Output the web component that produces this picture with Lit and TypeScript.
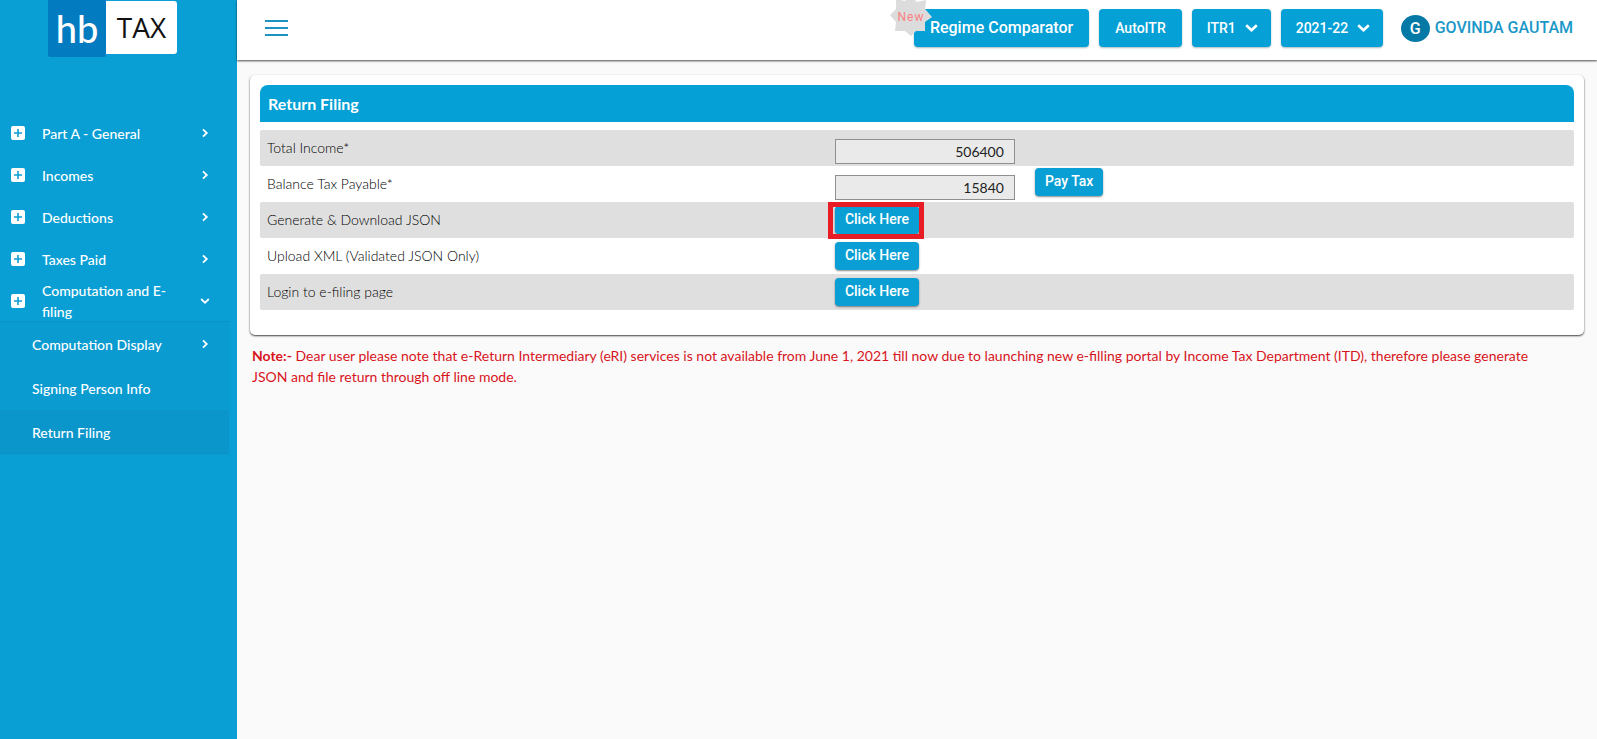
import { LitElement, html, css, svg, nothing } from "lit";
import { customElement } from "lit/decorators.js";
import { classMap } from "lit/directives/class-map.js";

interface NavItem {
  label: string;
  open?: boolean;
}

const NAV: NavItem[] = [
  { label: "Part A - General" },
  { label: "Incomes" },
  { label: "Deductions" },
  { label: "Taxes Paid" },
  { label: "Computation and E-filing", open: true },
];

const SUB_NAV = [
  { label: "Computation Display", more: true, active: false },
  { label: "Signing Person Info", more: false, active: false },
  { label: "Return Filing", more: false, active: true },
];

const chevronRight = html`<svg class="chevron" viewBox="0 0 10 10" aria-hidden="true">
  ${svg`<path d="M3 1.3 6.8 5 3 8.7" fill="none" stroke="currentColor" stroke-width="1.8" />`}
</svg>`;

const chevronDown = html`<svg class="chevron" viewBox="0 0 10 10" aria-hidden="true">
  ${svg`<path d="M1.2 3 5 6.8 8.8 3" fill="none" stroke="currentColor" stroke-width="1.8" />`}
</svg>`;

const plusBox = html`<svg class="plus" viewBox="0 0 14 14" aria-hidden="true">
  <rect width="14" height="14" rx="2" fill="#fff" />
  <path d="M7 3v8M3 7h8" stroke="#0b9fd4" stroke-width="1.6" />
</svg>`;

@customElement("side-nav")
export class SideNav extends LitElement {
  static styles = css`
    :host {
      display: block;
      background: #0a9fd4;
      color: #fff;
      font: 500 14px/21px Lato, sans-serif;
    }
    .logo {
      display: flex;
      align-items: flex-start;
      width: 129px;
      margin: 0 auto 55px 48px;
      text-decoration: none;
    }
    .hb {
      flex: 0 0 58px;
      height: 57px;
      background: #027bc1;
      color: #fff;
      font: 500 38px/57px Lato, sans-serif;
      text-align: center;
      border-radius: 0 0 2px 2px;
    }
    .tax {
      flex: 1;
      height: 53px;
      margin-top: 1px;
      background: #fff;
      color: #111;
      font: 400 28px/53px "Open Sans", sans-serif;
      text-align: center;
      border-radius: 0 3px 3px 0;
    }
    ul {
      list-style: none;
      margin: 0;
      padding: 0;
    }
    .item {
      display: flex;
      align-items: center;
      height: 42px;
      box-sizing: border-box;
      margin-right: 8px;
      padding: 0 19px 0 11px;
      color: inherit;
      text-decoration: none;
    }
    .open {
      box-shadow: inset 0 -1px #0b91c6;
    }
    .label {
      flex: 1;
      max-width: 130px;
    }
    .plus {
      width: 14px;
      height: 14px;
      margin-right: 17px;
    }
    .chevron {
      width: 10px;
      height: 10px;
      margin-left: auto;
    }
    .group {
      background: #0a9bd0;
    }
    .sub {
      height: 44px;
      padding-left: 32px;
    }
    .active {
      background: #0b96cb;
      box-shadow: inset 0 -1px #0b91c6;
    }
    .sub .label {
      max-width: none;
    }
  `;

  render() {
    return html`
      <a class="logo" href="#" aria-label="hb TAX"><span class="hb">hb</span><span class="tax">TAX</span></a>
      <nav>
        <ul>
          ${NAV.map(
            (item) => html`<li>
              <a class=${classMap({ item: true, open: !!item.open })} href="#">
                ${plusBox}<span class="label">${item.label}</span>${item.open ? chevronDown : chevronRight}
              </a>
              ${item.open
                ? html`<ul>
                    ${SUB_NAV.map(
                      (s) => html`<li>
                        <a class=${classMap({ item: true, group: !s.active, sub: true, active: s.active })} href="#">
                          <span class="label">${s.label}</span>${s.more ? chevronRight : nothing}
                        </a>
                      </li>`
                    )}
                  </ul>`
                : nothing}
            </li>`
          )}
        </ul>
      </nav>
    `;
  }
}

@customElement("top-bar")
export class TopBar extends LitElement {
  static styles = css`
    :host {
      display: flex;
      align-items: flex-start;
      gap: 10px;
      height: 60px;
      box-sizing: border-box;
      padding: 9px 24px 0 28px;
      background: #fff;
      box-shadow: 0 1px 2px rgba(0, 0, 0, 0.7);
      font: 500 14px/20px Roboto, sans-serif;
    }
    .menu {
      margin-right: auto;
      padding: 11px 0;
      border: 0;
      background: none;
    }
    .menu svg {
      display: block;
      width: 23px;
      height: 16px;
    }
    .btn {
      height: 38px;
      border: 0;
      border-radius: 4px;
      background: #04a0d6;
      color: #fff;
      font: inherit;
      box-shadow: 0 1px 2px rgba(0, 60, 90, 0.35);
    }
    .compare {
      position: relative;
      padding: 0 16px;
      font-size: 16px;
    }
    .new {
      position: absolute;
      left: -25px;
      top: -14px;
      width: 44px;
      height: 44px;
    }
    .new text {
      font: 400 12px Roboto, sans-serif;
      letter-spacing: 1px;
    }
    .auto {
      padding: 0 16px;
    }
    .pick {
      position: relative;
      display: flex;
    }
    .pick select {
      appearance: none;
      padding: 0 34px 0 15px;
    }
    .pick svg {
      position: absolute;
      right: 13px;
      top: 14px;
      width: 13px;
      height: 10px;
      pointer-events: none;
    }
    .user {
      display: flex;
      align-items: center;
      gap: 5px;
      height: 38px;
      margin-left: 8px;
      color: #1b98c9;
      font-size: 16px;
      text-decoration: none;
    }
    .avatar {
      width: 29px;
      height: 27px;
      border-radius: 50%;
      background: #0579a6;
      color: #fff;
      line-height: 27px;
      text-align: center;
    }
  `;

  private picker(label: string, value: string) {
    return html`<span class="pick">
      <select class="btn" aria-label=${label}><option>${value}</option></select>
      <svg viewBox="0 0 13 10" aria-hidden="true">
        <path d="M1.2 2.2 6.5 7.3 11.8 2.2" fill="none" stroke="#fff" stroke-width="2.6" />
      </svg>
    </span>`;
  }

  render() {
    return html`
      <button class="menu" aria-label="Menu">
        <svg viewBox="0 0 23 16"><path d="M0 1h23M0 8h23M0 15h23" stroke="#1d93c2" stroke-width="2" /></svg>
      </button>
      <button class="btn compare">
        Regime Comparator
        <svg class="new" viewBox="0 0 44 44">
          <path
            d="M22 1 28 7 37 5 36 14 43 22 36 27 36 36 27 36 22 41 16 36 6 36 7 27 1 20 7 14 7 4 16 6Z"
            fill="#dcdcdc"
          />
          <text x="22" y="26" text-anchor="middle" fill="#fb7f82">New</text>
        </svg>
      </button>
      <button class="btn auto">AutoITR</button>
      ${this.picker("Return form", "ITR1")} ${this.picker("Assessment year", "2021-22")}
      <a class="user" href="#"><span class="avatar">G</span>GOVINDA GAUTAM</a>
    `;
  }
}

@customElement("return-filing")
export class ReturnFiling extends LitElement {
  static styles = css`
    :host {
      display: block;
      font: 300 14px/21px Lato, sans-serif;
      color: #000;
    }
    .card {
      padding: 10px 10px 25px;
      border-radius: 5px;
      background: #fff;
      box-shadow: 0 1px 2px rgba(0, 0, 0, 0.75);
    }
    h1 {
      margin: 0 0 8px;
      padding: 0 8px;
      border-radius: 8px 8px 0 0;
      background: #04a0d6;
      color: #fff;
      font: 700 16px/37px Lato, sans-serif;
    }
    .row {
      display: grid;
      grid-template-columns: 7fr 9fr;
      height: 36px;
      padding: 0 9px 0 7px;
      border-radius: 2px;
    }
    .row:nth-of-type(odd) {
      background: #dfdfdf;
    }
    .name {
      padding-top: 7px;
    }
    .cell {
      display: flex;
      align-items: flex-start;
      gap: 20px;
    }
    input {
      width: 180px;
      height: 25px;
      box-sizing: border-box;
      margin: 9px 0 0;
      padding: 0 10px;
      border: 1px solid #8f8f8f;
      background: #eaeaea;
      color: #222;
      font: 400 14px Lato, sans-serif;
      text-align: right;
    }
    button {
      height: 28px;
      margin: 4px 0 0;
      padding: 0 10px 2px;
      border: 0;
      border-radius: 4px;
      background: #0a9fd4;
      color: #fff;
      font: 500 14px/24px Roboto, sans-serif;
      box-shadow: 0 1px 2px rgba(0, 0, 0, 0.45);
    }
    .pay {
      margin-top: 2px;
    }
    .marked {
      position: relative;
    }
    .marked::after {
      content: "";
      position: absolute;
      inset: 0 -5px -5px -7px;
      border: 5px solid #e81c24;
    }
    .note {
      margin: 10px 24px 0 2px;
      color: #d8141c;
      font-weight: 400;
    }
  `;

  private action(label: string, marked = false) {
    return html`<div class="row">
      <span class="name">${label}</span>
      <div class="cell">
        <span class=${classMap({ marked })}><button aria-label="${label}: Click Here">Click Here</button></span>
      </div>
    </div>`;
  }

  render() {
    return html`
      <section class="card">
        <h1>Return Filing</h1>
        <div class="row">
          <label class="name" for="income">Total Income*</label>
          <div class="cell"><input id="income" readonly value="506400" /></div>
        </div>
        <div class="row">
          <label class="name" for="balance">Balance Tax Payable*</label>
          <div class="cell"><input id="balance" readonly value="15840" /><button class="pay">Pay Tax</button></div>
        </div>
        ${this.action("Generate & Download JSON", true)} ${this.action("Upload XML (Validated JSON Only)")}
        ${this.action("Login to e-filing page")}
      </section>
      <p class="note">
        <b>Note:-</b> Dear user please note that e-Return Intermediary (eRI) services is not available from June 1,
        2021 till now due to launching new e-filling portal by Income Tax Department (ITD), therefore please generate
        JSON and file return through off line mode.
      </p>
    `;
  }
}

@customElement("app-root")
export class AppRoot extends LitElement {
  static styles = css`
    :host {
      display: grid;
      grid-template-columns: 237px 1fr;
      min-height: 100vh;
      background: #fafafa;
    }
    .page {
      padding: 15px 13px;
    }
  `;

  render() {
    return html`
      <side-nav></side-nav>
      <div>
        <top-bar></top-bar>
        <main class="page"><return-filing></return-filing></main>
      </div>
    `;
  }
}
